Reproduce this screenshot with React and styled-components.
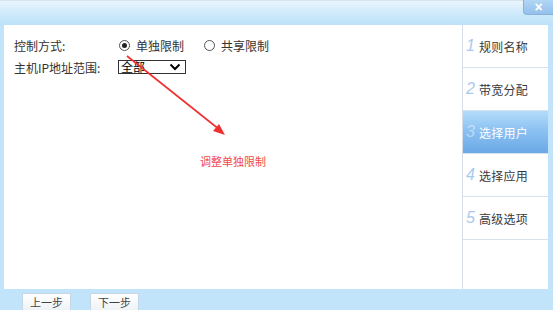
import React from "react";
import styled, { createGlobalStyle } from "styled-components";

const GlobalStyle = createGlobalStyle`
  html, body {
    margin: 0;
    padding: 0;
    background: #ffffff;
  }
  body {
    font-family: "Liberation Sans", "Noto Sans CJK SC", sans-serif;
  }
`;

const steps = [
  { num: 1, label: "规则名称" },
  { num: 2, label: "带宽分配" },
  { num: 3, label: "选择用户", active: true },
  { num: 4, label: "选择应用" },
  { num: 5, label: "高级选项" },
];

const App = () => {
  return (
    <>
      <GlobalStyle />
      <Dialog>
        <Header>
          <CloseButton>×</CloseButton>
        </Header>
        <Body>
          <Panel>
            <Content>
              <FormRow>
                <Label>控制方式:</Label>
                <RadioOption>
                  <Radio checked />
                  单独限制
                </RadioOption>
                <RadioOption>
                  <Radio />
                  共享限制
                </RadioOption>
              </FormRow>
              <FormRow>
                <Label>主机IP地址范围:</Label>
                <Select>
                  <span>全部</span>
                  <svg width="12" height="8" viewBox="0 0 12 8">
                    <path d="M1.5 1.5 L6 6 L10.5 1.5" fill="none" stroke="#000" strokeWidth="2" />
                  </svg>
                </Select>
              </FormRow>
              <Annotation>
                <svg width="553" height="310" viewBox="0 0 553 310">
                  <line x1="127" y1="56" x2="220" y2="130" stroke="#f03030" strokeWidth="1.6" />
                  <path d="M225 135 L213 131 L219 124 Z" fill="#f03030" />
                </svg>
                <Note>调整单独限制</Note>
              </Annotation>
            </Content>
            <Sidebar>
              {steps.map((s) => (
                <Step key={s.num} active={s.active}>
                  <StepNum active={s.active}>{s.num}</StepNum>
                  {s.label}
                </Step>
              ))}
            </Sidebar>
          </Panel>
        </Body>
        <Footer>
          <FooterButton>上一步</FooterButton>
          <FooterButton>下一步</FooterButton>
        </Footer>
      </Dialog>
    </>
  );
};

const Dialog = styled.div`
  position: relative;
  width: 553px;
  height: 310px;
  display: flex;
  flex-direction: column;
  overflow: hidden;
  background: #c2e4fa;
`;

const Header = styled.div`
  height: 25px;
  flex: none;
  display: flex;
  justify-content: flex-end;
  align-items: flex-start;
  box-sizing: border-box;
  border-top: 1px solid #d6e2ec;
  background: linear-gradient(to bottom, #eaf5fd 0%, #cfeafb 50%, #bde1f9 100%);
`;

const CloseButton = styled.div`
  width: 30px;
  height: 15px;
  margin-top: -1px;
  box-sizing: border-box;
  border: 1px solid #86b2dc;
  border-top: none;
  border-right: none;
  border-radius: 0 0 0 4px;
  background: linear-gradient(to bottom, #b2d6f4, #94c0ea);
  color: #ffffff;
  font-family: "Liberation Sans", sans-serif;
  font-size: 14px;
  font-weight: bold;
  line-height: 14px;
  text-align: center;
`;

const Body = styled.div`
  flex: 1;
  display: flex;
  padding: 0 5px 0 4px;
  min-height: 0;
`;

const Panel = styled.div`
  flex: 1;
  display: flex;
  background: #ffffff;
`;

const Content = styled.div`
  position: relative;
  flex: 1;
  padding: 9px 0 0 10px;
  font-family: "Noto Sans CJK SC", sans-serif;
  font-size: 12px;
  color: #333;
`;

const FormRow = styled.div`
  height: 22px;
  display: flex;
  align-items: center;
`;

const Label = styled.div`
  width: 104px;
  flex: none;
`;

const RadioOption = styled.div`
  display: flex;
  align-items: center;
  margin-right: 19px;
`;

const Radio = styled.span`
  width: 9px;
  height: 9px;
  margin: 0 6px 0 1px;
  border: 1px solid #555;
  border-radius: 50%;
  box-sizing: content-box;
  display: inline-flex;
  align-items: center;
  justify-content: center;
  &::after {
    content: "";
    width: 5px;
    height: 5px;
    border-radius: 50%;
    background: ${(p) => (p.checked ? "#222" : "transparent")};
  }
`;

const Select = styled.div`
  width: 68px;
  height: 14px;
  box-sizing: border-box;
  border: 1px solid #333;
  display: flex;
  align-items: center;
  justify-content: space-between;
  padding: 0 4px 0 2px;
  font-size: 12px;
  line-height: 12px;
  color: #000;
`;

const Annotation = styled.div`
  position: absolute;
  left: -4px;
  top: -25px;
  width: 553px;
  height: 310px;
  pointer-events: none;
`;

const Note = styled.div`
  position: absolute;
  left: 200px;
  top: 153px;
  font-family: "Noto Sans CJK SC", sans-serif;
  font-size: 11px;
  color: #f24a4a;
`;

const Sidebar = styled.div`
  width: 85px;
  flex: none;
  border-left: 1px solid #d6dde4;
  display: flex;
  flex-direction: column;
`;

const Step = styled.div`
  height: 43px;
  box-sizing: border-box;
  border-bottom: 1px solid #d4e2ee;
  display: flex;
  align-items: center;
  padding-left: 3px;
  font-family: "Noto Sans CJK SC", sans-serif;
  font-size: 12px;
  letter-spacing: 0.2px;
  color: ${(p) => (p.active ? "#ffffff" : "#3a3a3a")};
  background: ${(p) =>
    p.active
      ? "linear-gradient(to bottom, #b4dcfa 0%, #8cc2f2 45%, #6aa8e6 100%)"
      : "#ffffff"};
`;

const StepNum = styled.span`
  font-family: "Liberation Sans", sans-serif;
  font-style: italic;
  font-size: 16px;
  margin-right: 4px;
  color: ${(p) => (p.active ? "rgba(255,255,255,0.45)" : "#a9c9ee")};
`;

const Footer = styled.div`
  height: 21px;
  flex: none;
  display: flex;
  align-items: flex-end;
  gap: 19px;
  padding-left: 22px;
`;

const FooterButton = styled.div`
  width: 49px;
  height: 17px;
  box-sizing: border-box;
  border: 1px solid #c6d6e6;
  border-bottom: none;
  background: linear-gradient(to bottom, #ffffff, #eef3f7);
  font-family: "Noto Sans CJK SC", sans-serif;
  font-size: 11px;
  color: #444;
  text-align: center;
  line-height: 17px;
`;

export default App;
